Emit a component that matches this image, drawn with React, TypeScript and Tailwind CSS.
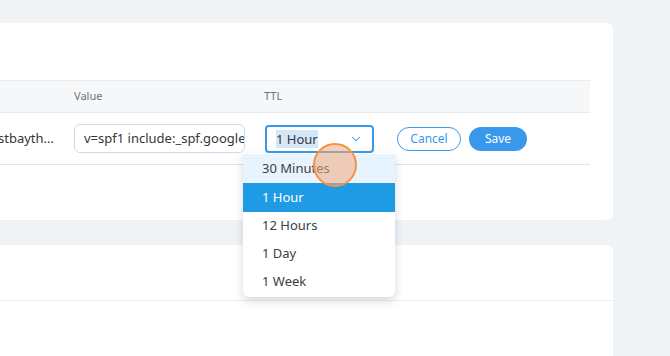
import { ChevronDown } from "lucide-react";

const options = ["30 Minutes", "1 Hour", "12 Hours", "1 Day", "1 Week"];

export default function App() {
  return (
    <div
      className="relative h-[356px] w-[670px] overflow-hidden bg-[#eff3f6] pt-[23px]"
      style={{ fontFamily: '"Noto Sans", "Open Sans", sans-serif' }}
    >
      {/* DNS record card */}
      <div className="relative h-[197px] w-[613px] rounded-r-[6px] bg-white pt-[57px]">
        <div className="w-[590px]">
          {/* table header */}
          <div className="flex h-[33px] items-center border-y border-[#e9ecef] bg-[#f6f7f8] text-[11px] text-[#6f7479]">
            <span className="ml-[74px] w-[190px]">Value</span>
            <span>TTL</span>
          </div>
          {/* editing row */}
          <div className="flex h-[52px] items-center border-b border-[#e3e6e9] text-[13px] text-[#32373c]">
            <span className="-ml-[14px] mr-[20px] w-[68px] shrink-0 truncate">
              testbaythink.com
            </span>
            <div className="flex h-[29px] w-[171px] items-center overflow-hidden rounded-[6px] border border-[#c9dcee] pl-[9px] whitespace-nowrap">
              v=spf1 include:_spf.google.com ~all
            </div>
            <div className="ml-[20px] flex h-[28px] w-[109px] items-center justify-between rounded-[4px] border-2 border-[#3899ec] pl-[9px] pr-[9px]">
              <span className="bg-[#d3e7f8] leading-[18px]">1 Hour</span>
              <ChevronDown size={14} strokeWidth={1.8} className="text-[#3899ec]" />
            </div>
            <button className="ml-[23px] flex h-[24px] w-[64px] items-center justify-center rounded-full border border-[#3899ec] text-[12px] text-[#3899ec]">
              Cancel
            </button>
            <button className="ml-[8px] flex h-[24px] w-[58px] items-center justify-center rounded-full bg-[#3899ec] text-[12px] text-white">
              Save
            </button>
          </div>
        </div>
      </div>

      {/* second card */}
      <div className="mt-[25px] h-[120px] w-[613px] rounded-tr-[6px] bg-white">
        <div className="h-[56px] border-b border-[#eef1f4]" />
      </div>

      {/* dropdown */}
      <div className="absolute left-[243px] top-[153px] w-[152px] overflow-hidden rounded-b-[6px] bg-white pt-[1px] pb-[1px] text-[13px] text-[#3b4046] shadow-[0_4px_10px_rgba(22,45,61,0.18)]">
        {options.map((o, i) => (
          <div
            key={o}
            className={
              i === 0
                ? "flex h-[29px] items-center bg-[#e8f4fd] pl-[19px]"
                : i === 1
                  ? "flex h-[29px] items-center bg-[#1f9be6] pl-[19px] text-white"
                  : "flex h-[28px] items-center pl-[19px]"
            }
          >
            {o}
          </div>
        ))}
      </div>

      {/* click indicator */}
      <div className="absolute left-[313px] top-[143px] h-[44px] w-[44px] rounded-full border-2 border-[#f59340] bg-[rgba(243,170,125,0.55)]" />
    </div>
  );
}
